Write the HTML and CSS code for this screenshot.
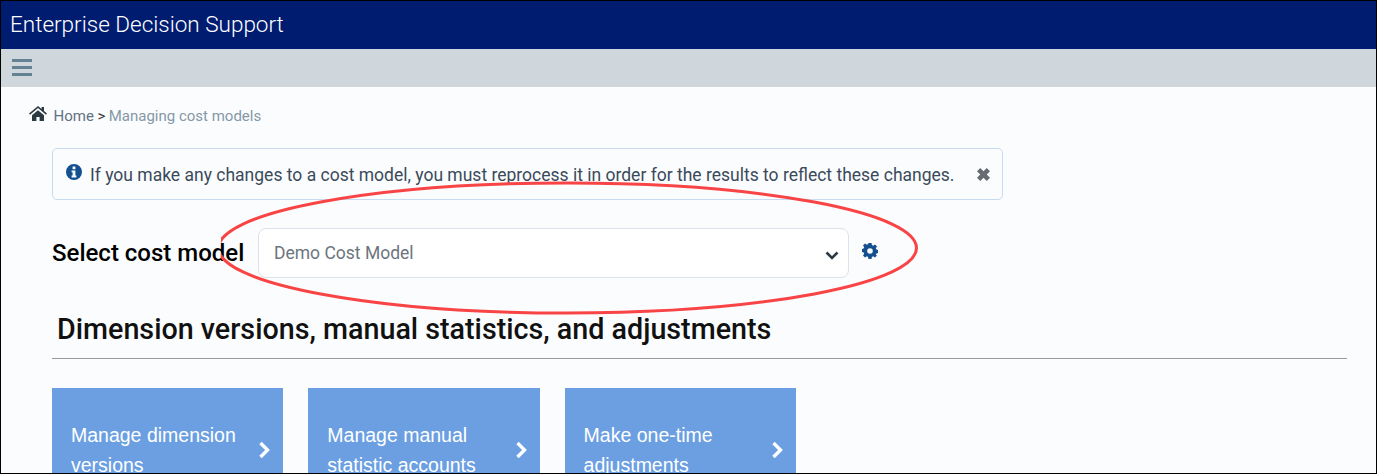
FILE: index.html
```html
<!DOCTYPE html>
<html lang="en">
<head>
    <meta charset="UTF-8">
    <title>Enterprise Decision Support</title>
    <link rel="stylesheet" href="styles.css">
</head>
<body>
    <div class="frame">
        <header class="app-header">Enterprise Decision Support</header>
        <div class="toolbar">
            <svg class="menu-icon" viewBox="0 0 20 17"><path d="M0 0h20v3H0zM0 7h20v3H0zM0 14h20v3H0z"/></svg>
        </div>

        <main class="content">
            <nav class="breadcrumb">
                <svg class="home-icon" viewBox="0 0 18 15"><path d="M9 0 0 7.6l1 1.1L9 2l8 6.7 1-1.1-3-2.6V1h-2.4v2L9 0zM3 9.2V15h4.4v-4h3.2v4H15V9.2L9 4.2 3 9.2z"/></svg>
                <a class="crumb-link">Home</a>
                <span class="crumb-sep">&gt;</span>
                <span class="crumb-current">Managing cost models</span>
            </nav>

            <div class="alert">
                <svg class="info-icon" viewBox="0 0 16 16"><path fill-rule="evenodd" d="M8 0a8 8 0 1 1 0 16A8 8 0 0 1 8 0zM6.6 2.6v2.6h2.8V2.6H6.6zM5.6 6.6v1.7h1v3.1h-1v2h4.8v-2h-1V6.6H5.6z"/></svg>
                <span class="alert-text">If you make any changes to a cost model, you must reprocess it in order for the results to reflect these changes.</span>
                <svg class="close-icon" viewBox="0 0 12 12"><path d="M3 0l3 3 3-3 3 3-3 3 3 3-3 3-3-3-3 3-3-3 3-3-3-3z"/></svg>
            </div>

            <div class="model-row">
                <label class="model-label">Select cost model</label>
                <div class="select-box">
                    <span>Demo Cost Model</span>
                    <svg class="select-arrow" viewBox="0 0 14 9"><path d="M1.5 1.5 7 7l5.500-5.500"/></svg>
                </div>
                <svg class="gear-icon" viewBox="0 0 16 16"><path fill-rule="evenodd" d="M6.500 0h3l.4 2.100 1.300.6L13 1.500l2 2-1.200 1.800.6 1.300 1.600.4v3l-1.600.4-.6 1.300L15 12.500l-2 2-1.800-1.200-1.300.6L9.500 16h-3l-.4-2.100-1.300-.6L3 14.500l-2-2 1.200-1.800-.6-1.300L0 9V6l1.600-.4.6-1.300L1 2.500l2-2 1.800 1.200 1.300-.6L6.500 0zM8 5.200a2.800 2.800 0 1 0 0 5.600 2.800 2.800 0 0 0 0-5.600z"/></svg>
            </div>

            <h2 class="section-title">Dimension versions, manual statistics, and adjustments</h2>

            <div class="cards">
                <div class="card">
                    <span>Manage dimension versions</span>
                    <svg class="card-arrow" viewBox="0 0 12 18"><path d="M2.500 2 9.500 9l-7 7"/></svg>
                </div>
                <div class="card">
                    <span>Manage manual statistic accounts</span>
                    <svg class="card-arrow" viewBox="0 0 12 18"><path d="M2.500 2 9.500 9l-7 7"/></svg>
                </div>
                <div class="card">
                    <span>Make one-time adjustments</span>
                    <svg class="card-arrow" viewBox="0 0 12 18"><path d="M2.500 2 9.500 9l-7 7"/></svg>
                </div>
            </div>
        </main>

        <!-- red callout drawn over the screenshot -->
        <svg class="callout" viewBox="0 0 720 150"><ellipse cx="346.500" cy="73" rx="349" ry="65"/></svg>
    </div>
</body>
</html>
```

FILE: styles.css
```css
html, body {
    margin: 0;
    height: 100%;
}
body {
    font-family: Roboto, "Liberation Sans", sans-serif;
    background: #fff;
    overflow: hidden;
}
.frame {
    position: relative;
    box-sizing: border-box;
    height: 474px;
    border: 1px solid #000;
    background: #fbfcfe;
    overflow: hidden;
}
.app-header {
    height: 48px;
    line-height: 47px;
    padding-left: 9px;
    background: #001c71;
    color: #fff;
    font-size: 22.500px;
    font-weight: 300;
}
.toolbar {
    display: flex;
    align-items: center;
    height: 38px;
    padding-left: 11px;
    background: #d0d7dc;
}
.menu-icon {
    width: 20px;
    height: 17px;
    margin-top: -2px;
    fill: #658295;
}
.content {
    padding: 0 29px 0 51px;
}
.breadcrumb {
    display: flex;
    align-items: center;
    gap: 3.500px;
    margin: 19px 0 0 -23px;
    height: 20px;
    font-size: 15px;
}
.home-icon {
    width: 18px;
    height: 15px;
    margin: -6px 3px 0 0;
    fill: #2b3a42;
}
.crumb-link { color: #5f7282; }
.crumb-sep { color: #333; }
.crumb-current { color: #8598a6; }
.alert {
    display: flex;
    align-items: center;
    box-sizing: border-box;
    width: 951px;
    height: 52px;
    margin-top: 22px;
    padding: 1px 12px 0 13px;
    border: 1px solid #c9dbf0;
    border-radius: 5px;
    color: #3a4a5a;
    font-size: 17.500px;
}
.info-icon {
    flex: none;
    width: 16px;
    height: 16px;
    margin: -5px 8px 0 0;
    fill: #14508f;
}
.alert-text {
    flex: 1;
    white-space: nowrap;
}
.close-icon {
    flex: none;
    width: 13px;
    height: 13px;
    margin-top: -1px;
    fill: #666c72;
}
.model-row {
    display: flex;
    align-items: center;
    margin-top: 28px;
}
.model-label {
    width: 206px;
    color: #000;
    font-size: 24px;
    font-weight: 500;
    white-space: nowrap;
}
.select-box {
    display: flex;
    align-items: center;
    justify-content: space-between;
    box-sizing: border-box;
    width: 591px;
    height: 50px;
    padding: 0 9px 0 15px;
    border: 1px solid #dde1e8;
    border-radius: 8px;
    background: #fff;
    color: #6c757d;
    font-size: 17.500px;
}
.select-arrow {
    width: 14px;
    height: 9px;
    margin-top: 4px;
    fill: none;
    stroke: #2b3a42;
    stroke-width: 2.600;
}
.gear-icon {
    width: 16px;
    height: 16px;
    margin: -4px 0 0 13px;
    fill: #14508f;
}
.section-title {
    margin: 33px 0 0;
    padding: 0 0 10px 5px;
    border-bottom: 1px solid #999;
    color: #111;
    font-size: 28.700px;
    font-weight: 500;
    line-height: 37px;
}
.cards {
    display: flex;
    gap: 25px;
    margin-top: 29px;
}
.card {
    display: flex;
    align-items: center;
    box-sizing: border-box;
    width: 231.300px;
    height: 124px;
    padding: 0 13px 0 19px;
    background: #6b9fe2;
    color: #fff;
    font-family: "Liberation Sans", Arial, sans-serif;
    font-size: 19.500px;
    line-height: 30px;
}
.card span {
    flex: 1;
    padding-right: 20px;
}
.card-arrow {
    flex: none;
    width: 12px;
    height: 18px;
    fill: none;
    stroke: #fff;
    stroke-width: 3.400;
}
.callout {
    position: absolute;
    left: 220px;
    top: 174px;
    width: 720px;
    height: 150px;
    fill: none;
    stroke: #f94446;
    stroke-width: 3;
    pointer-events: none;
}
```
